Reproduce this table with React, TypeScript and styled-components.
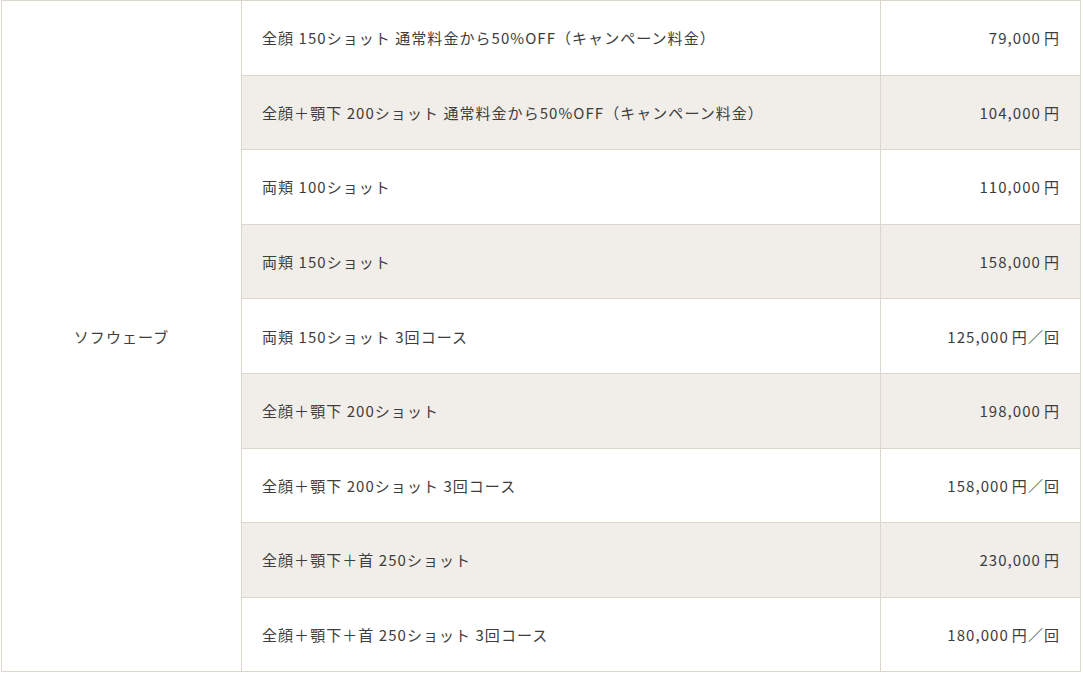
import React from "react";
import styled, { createGlobalStyle } from "styled-components";

const GlobalStyle = createGlobalStyle`
	html, body {
		margin: 0;
		padding: 0;
		background: #fff;
	}

	body {
		font-family: "Noto Sans CJK JP", "Noto Sans", sans-serif;
		color: #3d3d3d;
	}
`;

const Wrapper = styled.div`
	padding-left: 1px;
	width: 1080px;
`;

const PriceTable = styled.table`
	width: 100%;
	border-collapse: collapse;
	table-layout: fixed;
	font-size: 15px;
	letter-spacing: 0.07em;

	td, th {
		border: 1px solid #ddd6cc;
		height: 74.6px;
		box-sizing: border-box;
		font-weight: 400;
	}
`;

const Head = styled.th`
	width: 240px;
	background: #fff;
	text-align: center;
`;

const Row = styled.tr<{ $shade: boolean }>`
	background: ${(p) => (p.$shade ? "#f1eeea" : "#fff")};
`;

const Name = styled.td`
	width: 639px;
	padding: 0 20px;
	text-align: left;
`;

const Price = styled.td`
	padding: 0 20px;
	text-align: right;
`;

const Yen = styled.span`
	margin-left: 3px;
`;

const rows = [
	{ name: "全顔 150ショット 通常料金から50%OFF（キャンペーン料金）", price: "79,000", per: false },
	{ name: "全顔＋顎下 200ショット 通常料金から50%OFF（キャンペーン料金）", price: "104,000", per: false },
	{ name: "両頬 100ショット", price: "110,000", per: false },
	{ name: "両頬 150ショット", price: "158,000", per: false },
	{ name: "両頬 150ショット 3回コース", price: "125,000", per: true },
	{ name: "全顔＋顎下 200ショット", price: "198,000", per: false },
	{ name: "全顔＋顎下 200ショット 3回コース", price: "158,000", per: true },
	{ name: "全顔＋顎下＋首 250ショット", price: "230,000", per: false },
	{ name: "全顔＋顎下＋首 250ショット 3回コース", price: "180,000", per: true },
];

const App = () => {
	return (
		<>
			<GlobalStyle />
			<Wrapper>
				<PriceTable>
					<tbody>
						{rows.map((el, i) => (
							<Row key={i} $shade={i % 2 === 1}>
								{i === 0 && <Head rowSpan={rows.length}>ソフウェーブ</Head>}
								<Name>{el.name}</Name>
								<Price>
									{el.price}
									<Yen>円{el.per && "／回"}</Yen>
								</Price>
							</Row>
						))}
					</tbody>
				</PriceTable>
			</Wrapper>
		</>
	);
};

export default App;
